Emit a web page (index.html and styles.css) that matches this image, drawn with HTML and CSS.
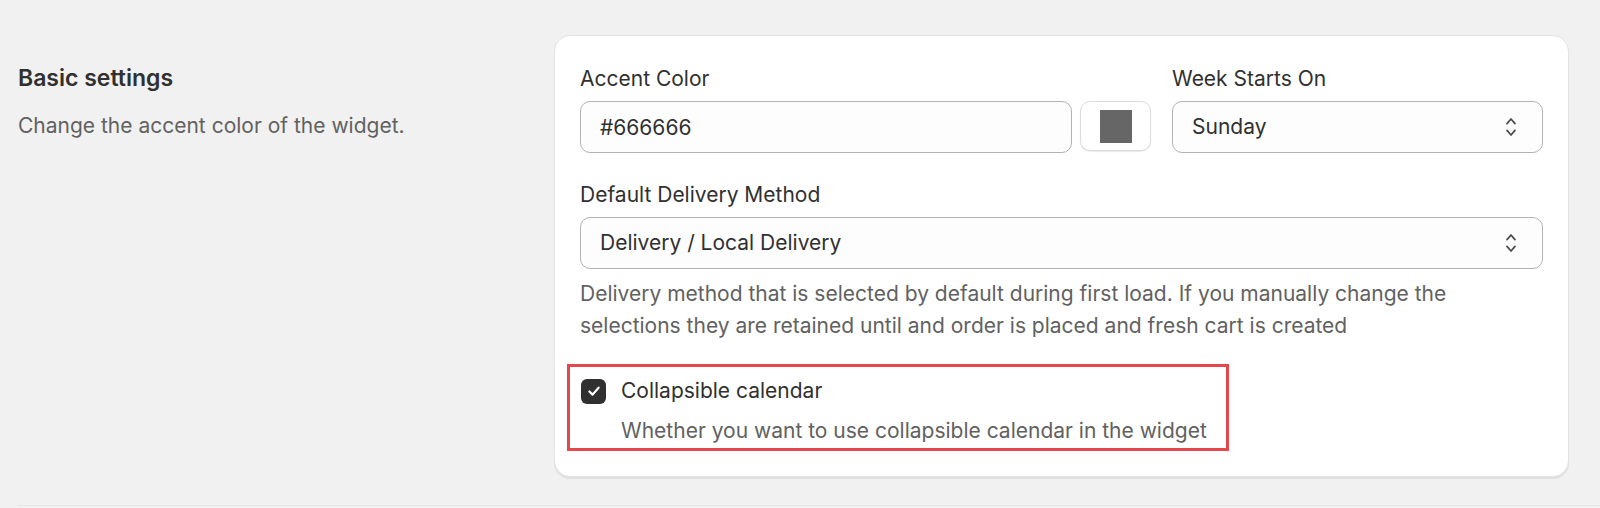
FILE: index.html
```html
<!DOCTYPE html>
<html lang="en">
<head>
<meta charset="UTF-8">
<meta name="viewport" content="width=device-width, initial-scale=1.0">
<title>Basic settings</title>
<link rel="stylesheet" href="styles.css">
</head>
<body>

<div class="section">
    <div class="aside">
        <h2 class="aside-title">Basic settings</h2>
        <p class="aside-text">Change the accent color of the widget.</p>
    </div>

    <div class="card">
        <div class="row">
            <div class="field grow">
                <label for="accent" class="label">Accent Color</label>
                <div class="color-row">
                    <input type="text" id="accent" class="input" value="#666666">
                    <button class="swatch-btn" type="button"><span class="swatch"></span></button>
                </div>
            </div>
            <div class="field week">
                <label for="week" class="label">Week Starts On</label>
                <div class="select">
                    <span class="select-value">Sunday</span>
                    <svg class="select-icon" viewBox="0 0 20 20" width="20" height="20">
                        <path d="M6 6.6 10 2 14 6.6M6 13.4 10 18 14 13.4" fill="none" stroke="#4a4a4a" stroke-width="1.7" stroke-linecap="round" stroke-linejoin="round"/>
                    </svg>
                </div>
            </div>
        </div>

        <div class="field method">
            <label for="method" class="label">Default Delivery Method</label>
            <div class="select">
                <span class="select-value">Delivery / Local Delivery</span>
                <svg class="select-icon" viewBox="0 0 20 20" width="20" height="20">
                    <path d="M6 6.6 10 2 14 6.6M6 13.4 10 18 14 13.4" fill="none" stroke="#4a4a4a" stroke-width="1.7" stroke-linecap="round" stroke-linejoin="round"/>
                </svg>
            </div>
            <p class="help">Delivery method that is selected by default during first load. If you manually change the selections they are retained until and order is placed and fresh cart is created</p>
        </div>

        <div class="highlight">
            <div class="check-row">
                <span class="checkbox">
                    <svg viewBox="0 0 20 20" width="22" height="22">
                        <path d="M5.8 10.4 8.7 13.3 14.2 7" fill="none" stroke="#fff" stroke-width="2" stroke-linecap="round" stroke-linejoin="round"/>
                    </svg>
                </span>
                <span class="check-label">Collapsible calendar</span>
            </div>
            <p class="check-help">Whether you want to use collapsible calendar in the widget</p>
        </div>
    </div>
</div>

<div class="divider"></div>

</body>
</html>
```

FILE: styles.css
```css
body {
    margin: 0;
    padding: 0;
    background: #f1f1f1;
    color: #303030;
    font-family: Inter, "Noto Sans", sans-serif;
    font-size: 21px;
    line-height: 30px;
}

.section {
    display: flex;
    padding: 35px 31px 0 18px;
}

.aside {
    width: 536px;
    padding-top: 28px;
}

.aside-title {
    margin: 0;
    font-size: 23px;
    font-weight: 600;
    line-height: 30px;
}

.aside-text {
    margin: 18px 0 0;
    color: #616161;
}

.card {
    flex: 1;
    background: #fff;
    border: 1px solid #e3e3e3;
    border-radius: 16px;
    box-shadow: 0 2px 1px rgba(0, 0, 0, 0.07);
    padding: 28px 25px 25px;
}

.row {
    display: flex;
    gap: 21px;
}

.grow {
    flex: 1;
}

.week {
    width: 371px;
}

.label {
    display: block;
    margin-bottom: 7px;
}

.color-row {
    display: flex;
    gap: 8px;
}

.input {
    flex: 1;
    height: 52px;
    box-sizing: border-box;
    border: 1px solid #b3b3b3;
    border-radius: 10px;
    background: #fdfdfd;
    padding: 0 19px;
    font: inherit;
    color: #303030;
}

.swatch-btn {
    width: 71px;
    height: 50px;
    border: 1px solid #dcdcdc;
    border-radius: 10px;
    background: #fff;
    box-shadow: 0 1px 1px rgba(0, 0, 0, 0.08);
    display: flex;
    align-items: center;
    justify-content: center;
    padding: 0;
}

.swatch {
    width: 32px;
    height: 33px;
    background: #666666;
}

.select {
    height: 52px;
    box-sizing: border-box;
    border: 1px solid #b3b3b3;
    border-radius: 10px;
    background: #fdfdfd;
    padding: 0 21px 0 19px;
    display: flex;
    align-items: center;
    justify-content: space-between;
}

.method {
    margin-top: 27px;
}

.help {
    margin: 9px 0 0;
    color: #616161;
    line-height: 32px;
}

.highlight {
    display: inline-block;
    margin-top: 22px;
    margin-left: -13px;
    border: 3px solid #e5474d;
    padding: 9px 19px 2px 11px;
}

.check-row {
    display: flex;
    align-items: center;
    gap: 15px;
}

.checkbox {
    width: 25px;
    height: 25px;
    border-radius: 6px;
    background: #303030;
    display: flex;
    align-items: center;
    justify-content: center;
}

.check-help {
    margin: 10px 0 0 40px;
    color: #616161;
}

.divider {
    margin: 28px 0 0 18px;
    border-top: 1px solid #e6e6e6;
}
```
